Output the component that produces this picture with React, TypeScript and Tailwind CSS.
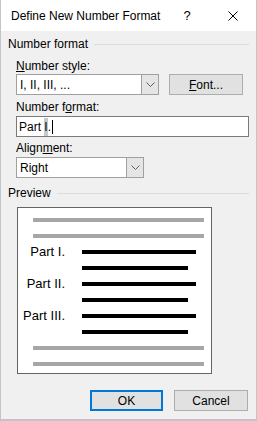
import React from 'react';

const font = { fontFamily: '"Liberation Sans", Arial, sans-serif' };

const Chevron = () => (
  <svg width="9" height="5" viewBox="0 0 9 5" fill="none">
    <path d="M0.5 0.5 L4.5 4.5 L8.5 0.5" stroke="#606060" strokeWidth="1" />
  </svg>
);

const Combo = ({ value, width }: { value: string; width: string }) => (
  <div className={`flex h-[21px] ${width} border border-[#a0a0a0] bg-white`}>
    <div className="flex flex-1 items-center pl-[3px] text-[12px] text-black">{value}</div>
    <div className="flex w-[17px] items-center justify-center border-l border-[#a0a0a0] bg-[#e5e5e5]">
      <Chevron />
    </div>
  </div>
);

const GroupHeader = ({ label }: { label: string }) => (
  <div className="flex h-4 items-center">
    <span className="text-[12px] leading-4 text-black">{label}</span>
    <div className="ml-[6px] h-px flex-1 bg-[#dcdcdc]" />
  </div>
);

const Line = ({ gray, width }: { gray?: boolean; width: string }) => (
  <div className={`h-[4px] ${width} ${gray ? 'bg-[#a6a6a6]' : 'bg-black'}`} />
);

export default function App() {
  const rows: { text?: string; gray?: boolean; width: string }[] = [
    { gray: true, width: 'w-[171px]' },
    { gray: true, width: 'w-[171px]' },
    { text: 'Part I.', width: 'w-[114px]' },
    { width: 'w-[106px]' },
    { text: 'Part II.', width: 'w-[114px]' },
    { width: 'w-[106px]' },
    { text: 'Part III.', width: 'w-[114px]' },
    { width: 'w-[106px]' },
    { gray: true, width: 'w-[171px]' },
    { gray: true, width: 'w-[171px]' },
  ];

  return (
    <div style={font} className="flex h-[421px] w-[257px] flex-col border-x border-b-2 border-[#c4c4c4] bg-[#f0f0f0]">
      {/* title bar */}
      <div className="flex h-[31px] items-center bg-white pl-[10px]">
        <span className="text-[12px] text-black">Define New Number Format</span>
        <span className="ml-[23px] text-[13px] text-black">?</span>
        <svg className="ml-[37px]" width="10" height="10" viewBox="0 0 10 10">
          <path d="M0.5 0.5 L9.5 9.5 M9.5 0.5 L0.5 9.5" stroke="#000" strokeWidth="1" />
        </svg>
      </div>

      <div className="flex flex-1 flex-col pl-[7px] pr-[7px]">
        <div className="mt-[5px]">
          <GroupHeader label="Number format" />
        </div>

        <div className="pl-[8px]">
          <div className="mt-[6px] h-4 text-[12px] leading-4 text-black">
            <span className="underline">N</span>umber style:
          </div>
          <div className="flex">
            <Combo value="I, II, III, ..." width="w-[143px]" />
            <button className="ml-[10px] flex h-[21px] w-[74px] items-center justify-center border border-[#adadad] bg-[#e1e1e1] text-[12px] text-black">
              <span className="underline">F</span>ont...
            </button>
          </div>

          <div className="mt-[4px] h-4 text-[12px] leading-4 text-black">
            Number f<span className="underline">o</span>rmat:
          </div>
          <div className="mt-[1px] flex h-[21px] w-[233px] items-center border border-[#7a7a7a] bg-white pl-[2px] text-[12px] text-black">
            <span>{'Part\u00a0'}</span>
            <span className="bg-[#c8c8c8]">I</span>
            <span>.</span>
            <span className="ml-px h-[14px] w-px bg-black" />
          </div>

          <div className="mt-[3px] h-4 text-[12px] leading-4 text-black">
            Align<span className="underline">m</span>ent:
          </div>
          <div className="mt-[1px]">
            <Combo value="Right" width="w-[128px]" />
          </div>
        </div>

        <div className="mt-[7px]">
          <GroupHeader label="Preview" />
        </div>

        <div className="ml-[9px] mt-[6px] flex w-[195px] flex-col border border-[#646464] bg-white pb-[1px] pt-[4px]">
          {rows.map((r, i) => (
            <div key={i} className="flex h-[16px] items-center">
              <div className="w-[47px] text-right text-[13px] leading-4 text-black">{r.text ?? ''}</div>
              <div className={r.gray ? '-ml-[32px]' : 'ml-[17px]'}>
                <Line gray={r.gray} width={r.width} />
              </div>
            </div>
          ))}
        </div>

        <div className="mt-[16px] flex justify-end gap-[11px] pr-px">
          <button className="flex h-[21px] w-[73px] items-center justify-center border-2 border-[#0078d7] bg-[#e1e1e1] text-[12px] text-black">
            OK
          </button>
          <button className="flex h-[21px] w-[74px] items-center justify-center border border-[#adadad] bg-[#e1e1e1] text-[12px] text-black">
            Cancel
          </button>
        </div>
      </div>
    </div>
  );
}
